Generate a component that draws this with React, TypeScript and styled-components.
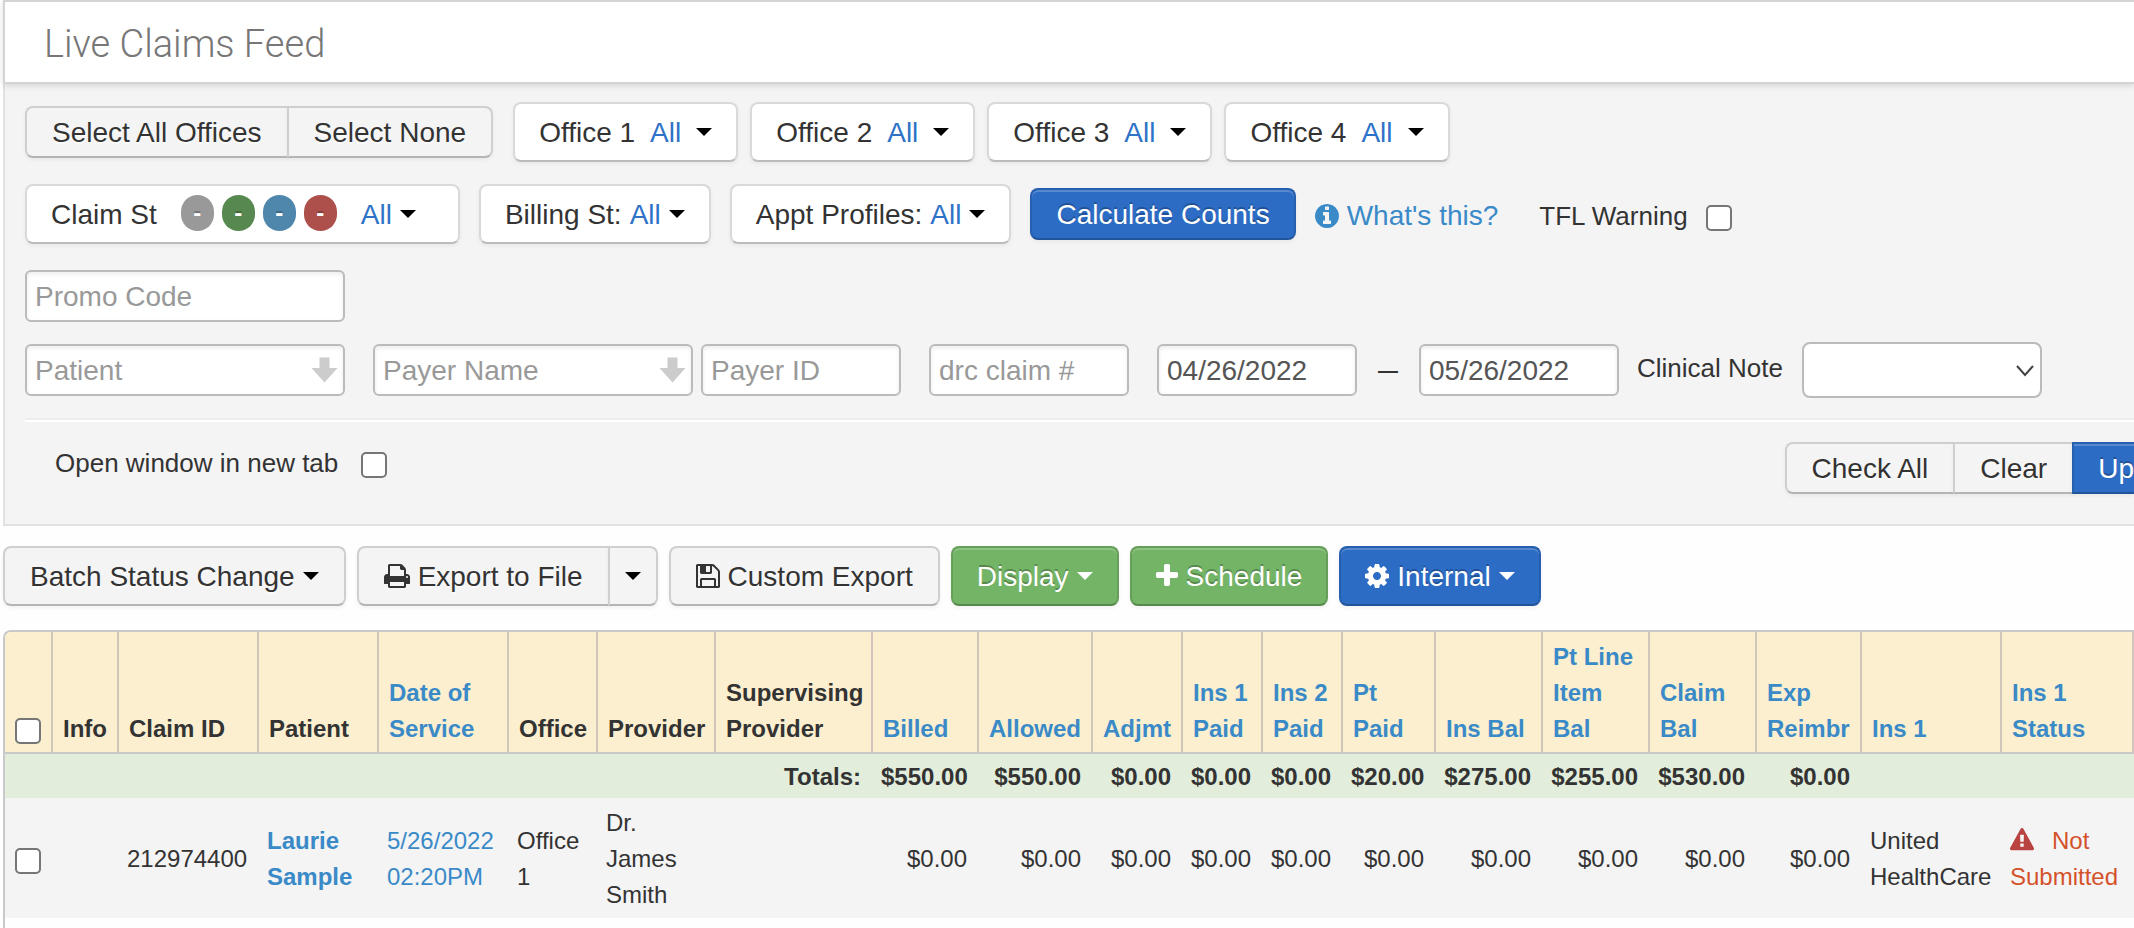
import React from "react";
import styled, { createGlobalStyle, css } from "styled-components";

const GlobalStyle = createGlobalStyle`
  *, *::before, *::after { box-sizing: border-box; }
  body {
    margin: 0;
    background: #fefefe;
    color: #333;
    font-family: "Liberation Sans", Arial, Helvetica, sans-serif;
  }
  button, input, select { font-family: inherit; }
`;

/* ---------- icons ---------- */

const iconShapes = {
  plus: {
    x: 192,
    w: 1408,
    d: "M1600 736v192q0 40-28 68t-68 28h-416v416q0 40-28 68t-68 28h-192q-40 0-68-28t-28-68v-416h-416q-40 0-68-28t-28-68v-192q0-40 28-68t68-28h416v-416q0-40 28-68t68-28h192q40 0 68 28t28 68v416h416q40 0 68 28t28 68z",
  },
  cog: {
    x: 128,
    w: 1536,
    d: "M1152 896q0-106-75-181t-181-75-181 75-75 181 75 181 181 75 181-75 75-181zm512-109v222q0 12-8 23t-20 13l-185 28q-19 54-39 91 35 50 107 138 10 12 10 25t-9 23q-27 37-99 108t-94 71q-12 0-26-9l-138-108q-44 23-91 38-16 136-29 186-7 28-36 28h-222q-14 0-24.500-8.500t-11.500-21.500l-28-184q-49-16-90-37l-141 107q-10 9-25 9-14 0-25-11-126-114-165-168-7-10-7-23 0-12 8-23 15-21 51-66.500t54-70.500q-27-50-41-99l-183-27q-13-2-21-12.500t-8-23.500v-222q0-12 8-23t19-13l186-28q14-46 39-92-40-57-107-138-10-12-10-24 0-10 9-23 26-36 98.500-107.500t94.500-71.500q13 0 26 10l138 107q44-23 91-38 16-136 29-186 7-28 36-28h222q14 0 24.500 8.500t11.500 21.500l28 184q49 16 90 37l142-107q9-9 24-9 13 0 25 10 129 119 165 170 7 8 7 22 0 12-8 23-15 21-51 66.500t-54 70.500q26 50 41 98l183 28q13 2 21 12.500t8 23.500z",
  },
  info: {
    x: 128,
    w: 1536,
    d: "M1152 1376v-160q0-14-9-23t-23-9h-96v-512q0-14-9-23t-23-9h-320q-14 0-23 9t-9 23v160q0 14 9 23t23 9h96v320h-96q-14 0-23 9t-9 23v160q0 14 9 23t23 9h448q14 0 23-9t9-23zm-128-896v-160q0-14-9-23t-23-9h-192q-14 0-23 9t-9 23v160q0 14 9 23t23 9h192q14 0 23-9t9-23zm640 416q0 209-103 385.500t-279.500 279.500-385.500 103-385.500-103-279.500-279.500-103-385.500 103-385.500 279.500-279.500 385.500-103 385.500 103 279.500 279.500 103 385.500z",
  },
  print: {
    x: 64,
    w: 1664,
    d: "M448 1536h896v-256h-896v256zm0-640h896v-384h-160q-40 0-68-28t-28-68v-160h-640v640zm1152 64q0-26-19-45t-45-19-45 19-19 45 19 45 45 19 45-19 19-45zm128 0v416q0 13-9.500 22.500t-22.500 9.500h-224v160q0 40-28 68t-68 28h-960q-40 0-68-28t-28-68v-160h-224q-13 0-22.500-9.500t-9.500-22.500v-416q0-79 56.500-135.500t135.500-56.500h64v-544q0-40 28-68t68-28h672q40 0 88 20t76 48l152 152q28 28 48 76t20 88v256h64q79 0 135.500 56.500t56.500 135.500z",
  },
  save: {
    x: 128,
    w: 1536,
    d: "M512 1536h768v-384h-768v384zm896 0h128v-896q0-14-10-38.500t-20-34.500l-281-281q-10-10-34-20t-39-10v416q0 40-28 68t-68 28h-576q-40 0-68-28t-28-68v-416h-128v1280h128v-416q0-40 28-68t68-28h832q40 0 68 28t28 68v416zm-384-928v-320q0-13-9.500-22.500t-22.500-9.500h-192q-13 0-22.500 9.500t-9.500 22.500v320q0 13 9.500 22.500t22.500 9.500h192q13 0 22.500-9.500t9.500-22.500zm640 32v928q0 40-28 68t-68 28h-1344q-40 0-68-28t-28-68v-1344q0-40 28-68t68-28h928q40 0 88 20t76 48l280 280q28 28 48 76t20 88z",
  },
  warning: {
    x: 0,
    w: 1792,
    d: "M1024 1375v-190q0-14-9.500-23.500t-22.500-9.500h-192q-13 0-22.500 9.500t-9.500 23.500v190q0 14 9.500 23.500t22.500 9.500h192q13 0 22.500-9.500t9.500-23.500zm-2-374l18-459q0-12-10-19-13-11-24-11h-220q-11 0-24 11-10 7-10 21l17 457q0 10 10 16.500t24 6.500h185q14 0 23.500-6.500t10.500-16.500zm-14-934l768 1408q35 63-2 126-17 29-46.500 46t-63.500 17h-1536q-34 0-63.500-17t-46.500-46q-37-63-2-126l768-1408q17-31 47-49t65-18 65 18 47 49z",
  },
};

const IconSvg = styled.svg`
  height: 28px;
  flex: none;
  fill: currentColor;
`;

function Icon({ name }: { name: keyof typeof iconShapes }) {
  const shape = iconShapes[name];
  return (
    <IconSvg viewBox={`${shape.x} 0 ${shape.w} 1792`} aria-hidden="true">
      <path d={shape.d} />
    </IconSvg>
  );
}

const WarningMark = styled.span`
  display: inline-block;
  margin-right: 18px;
  color: #b94340;
  vertical-align: -3px;

  svg {
    display: block;
    height: 24px;
  }
`;

const Caret = styled.span`
  flex: none;
  border: 8px solid transparent;
  border-top-color: currentColor;
  border-bottom: 0;
`;

/* ---------- buttons ---------- */

type Tone = "default" | "white" | "blue" | "green";

const tones = {
  default: css`
    padding: 2px 25px 0;
    color: #333;
    background: #f4f4f4;
    border-color: #cfcfcf #cfcfcf #b5b5b5;
    text-shadow: 0 2px 2px rgba(255, 255, 255, 0.75);
    ${Caret} { color: #000; }
  `,
  white: css`
    color: #333;
    background: #fff;
    border-color: #d9d9d9 #d9d9d9 #bcbcbc;
    ${Caret} { color: #000; }
  `,
  blue: css`
    color: #fff;
    background: #2d6cc5;
    border-color: #265fae #265fae #22549a;
    box-shadow: inset 0 2px 0 rgba(255, 255, 255, 0.2), 0 2px 4px rgba(0, 0, 0, 0.05);
    text-shadow: 0 -2px 0 rgba(0, 0, 0, 0.25);
  `,
  green: css`
    color: #fff;
    background: #74b467;
    border-color: #659f5a #659f5a #568a4c;
    box-shadow: inset 0 2px 0 rgba(255, 255, 255, 0.2), 0 2px 4px rgba(0, 0, 0, 0.05);
    text-shadow: 0 -2px 0 rgba(0, 0, 0, 0.25);
  `,
};

const Button = styled.button<{ $tone?: Tone; $tall?: boolean }>`
  display: inline-flex;
  flex: none;
  align-items: center;
  gap: 8px;
  height: ${(p) => (p.$tall ? 60 : 52)}px;
  padding: 2px 24px 0;
  border: 2px solid;
  border-radius: 8px;
  font-size: 28px;
  line-height: 32px;
  white-space: nowrap;
  box-shadow: 0 2px 4px rgba(0, 0, 0, 0.05);
  cursor: pointer;
  ${(p) => tones[p.$tone ?? "default"]}

  svg, ${Caret} { margin-bottom: 2px; }
`;

const OfficeButton = styled(Button)`
  gap: 15px;
`;

const ClaimStatusButton = styled(Button)`
  gap: 24px;
  padding-right: 42px;
`;

const SplitCaretButton = styled(Button)`
  padding: 2px 15px 0;
`;

const EdgeButton = styled(Button)`
  padding-right: 0;
`;

const ButtonGroup = styled.div<{ $openEnd?: boolean }>`
  display: flex;
  flex: none;

  > button { border-radius: 0; }
  > button + button { margin-left: -2px; }
  > button:first-child { border-radius: 8px 0 0 8px; }
  > button:last-child {
    border-radius: ${(p) => (p.$openEnd ? "0" : "0 8px 8px 0")};
    ${(p) => p.$openEnd && "border-right: 0;"}
  }
`;

const Choice = styled.span`
  color: #2f73c8;
`;

const ChoiceWithCaret = styled.span`
  display: inline-flex;
  align-items: center;
  gap: 8px;
`;

const Badges = styled.span`
  display: inline-flex;
  gap: 8px;
  margin-bottom: 4px;
`;

const Badge = styled.span<{ $color: string }>`
  width: 33px;
  height: 36px;
  border-radius: 18px;
  background: ${(p) => p.$color};
  color: #fff;
  font-size: 24px;
  font-weight: 700;
  line-height: 36px;
  text-align: center;
  text-shadow: 0 -2px 0 rgba(0, 0, 0, 0.25);
`;

/* ---------- form fields ---------- */

const Field = styled.input<{ $size?: "wide" | "normal" }>`
  display: block;
  flex: none;
  width: ${(p) => (p.$size === "wide" ? 320 : 200)}px;
  height: 52px;
  padding: 2px 8px 0;
  border: 2px solid #bbb;
  border-radius: 6px;
  background: #fff;
  box-shadow: inset 0 2px 4px rgba(0, 0, 0, 0.08);
  color: #555;
  font-size: 28px;

  &::placeholder {
    color: #999;
    opacity: 1;
  }
`;

const Overlaid = styled.div`
  position: relative;
  flex: none;
`;

const PickerArrow = styled.svg`
  position: absolute;
  right: 7px;
  top: 13px;
  width: 27px;
  height: 26px;
  fill: #ccc;
  pointer-events: none;
`;

const SelectChevron = styled.svg`
  position: absolute;
  right: 7px;
  top: 22px;
  width: 20px;
  height: 13px;
  fill: none;
  stroke: #444;
  stroke-width: 2;
  pointer-events: none;
`;

const Select = styled.select`
  display: block;
  width: 240px;
  height: 56px;
  appearance: none;
  border: 2px solid #bbb;
  border-radius: 8px;
  background: #fff;
  font-size: 28px;
`;

const Label = styled.label`
  flex: none;
  padding-bottom: 4px;
  font-size: 26px;
  line-height: 32px;
`;

const Checkbox = styled.input`
  display: block;
  flex: none;
  width: 26px;
  height: 26px;
  margin: 0;
  appearance: none;
  border: 2px solid #767676;
  border-radius: 5px;
  background: #fff;
`;

const CheckLabel = styled.label<{ $gap?: number }>`
  display: flex;
  align-items: center;
  gap: ${(p) => p.$gap ?? 18}px;
  font-size: 26px;
  line-height: 42px;
  white-space: nowrap;

  input { margin-top: 4px; }
`;

const Dash = styled.span`
  font-size: 20px;
  font-weight: 700;
`;

/* ---------- page structure ---------- */

const Page = styled.div`
  display: flex;
  flex-direction: column;
  min-height: 100vh;
  padding-left: 3px;
  overflow: hidden;
`;

const Header = styled.header`
  position: relative;
  height: 84px;
  padding-left: 39px;
  border: solid #d4d4d4;
  border-width: 2px 0 2px 2px;
  background: #fff;
  box-shadow: 0 2px 6px rgba(0, 0, 0, 0.12);
`;

const Title = styled.h1`
  margin: 0;
  color: #777;
  font-family: Roboto, "Liberation Sans", sans-serif;
  font-size: 38px;
  font-weight: 300;
  line-height: 84px;
`;

const Filters = styled.form`
  padding: 18px 0 30px 20px;
  border: solid #e2e2e2;
  border-width: 0 0 2px 2px;
  background: #f4f4f4;
`;

const OfficeRow = styled.div`
  display: flex;
  align-items: center;
  gap: 20px;
  margin-bottom: 22px;
`;

const Offices = styled.div`
  display: flex;
  gap: 12px;
`;

const StatusRow = styled.div`
  display: flex;
  align-items: center;
  gap: 19px;
  margin-bottom: 26px;
`;

const StatusHelp = styled.div`
  display: flex;
  align-items: center;
  gap: 41px;
  padding-top: 4px;
`;

const HelpLink = styled.a`
  display: inline-flex;
  align-items: center;
  gap: 8px;
  color: #3a8ac8;
  font-size: 28px;
  text-decoration: none;
  white-space: nowrap;
`;

const SearchRow = styled.div`
  display: flex;
  align-items: center;
  gap: 28px;
  margin: 20px 0;
`;

const PayerFields = styled.div`
  display: flex;
  gap: 8px;
`;

const DateFields = styled.div`
  display: flex;
  align-items: center;
  gap: 21px;
`;

const NoteField = styled.div`
  display: flex;
  align-items: center;
  gap: 19px;
  margin-left: -10px;
`;

const Divider = styled.hr`
  height: 4px;
  margin: 0;
  border: 0;
  border-top: 2px solid #ececec;
  border-bottom: 2px solid #fff;
`;

const ActionRow = styled.div`
  display: flex;
  align-items: flex-start;
  justify-content: space-between;
  padding: 20px 0 0 30px;
`;

const Toolbar = styled.div`
  display: flex;
  gap: 11px;
  margin: 20px 0 24px;
`;

const TableFrame = styled.div`
  flex: 1;
  border: solid #c9c9c9;
  border-width: 2px 0 0 2px;
  border-radius: 8px 0 0 0;
  overflow: hidden;
`;

const Table = styled.table`
  width: 100%;
  border-collapse: separate;
  border-spacing: 0;
  table-layout: fixed;
  font-size: 24px;
  line-height: 36px;

  a {
    color: #3a8ac8;
    text-decoration: none;
  }
`;

const HeadCell = styled.th<{ $width?: number }>`
  width: ${(p) => (p.$width ? `${p.$width}px` : "auto")};
  padding: 7px 10px 5px;
  border-bottom: 2px solid #c9c9c9;
  border-left: 2px solid #d0c6bb;
  background: #fcefcf;
  text-align: left;
  vertical-align: bottom;

  &:first-child { border-left: 0; }
  &:last-child { border-right: 2px solid #d0c6bb; }

  input { margin-bottom: 3px; }
`;

const TotalCell = styled.td`
  padding: 5px 10px 3px;
  background: #e2eedb;
  font-weight: 700;
  text-align: right;
`;

const Cell = styled.td<{ $money?: boolean }>`
  padding: 7px 10px 5px;
  background: #f4f4f4;
  text-align: ${(p) => (p.$money ? "right" : "left")};

  input { margin-top: 4px; }
`;

const Strong = styled.a`
  font-weight: 700;
`;

const NotSubmitted = styled.span`
  color: #d4522b;
`;

/* ---------- data ---------- */

const offices = ["Office 1", "Office 2", "Office 3", "Office 4"];
const badgeColors = ["#999", "#56884f", "#4f87ac", "#ad504c"];

const columns: { label: string; width?: number; sortable?: boolean }[] = [
  { label: "Info", width: 66 },
  { label: "Claim ID", width: 140 },
  { label: "Patient", width: 120 },
  { label: "Date of Service", width: 130, sortable: true },
  { label: "Office", width: 89 },
  { label: "Provider", width: 118 },
  { label: "Supervising Provider", width: 157 },
  { label: "Billed", width: 106, sortable: true },
  { label: "Allowed", width: 114, sortable: true },
  { label: "Adjmt", width: 90, sortable: true },
  { label: "Ins 1 Paid", width: 80, sortable: true },
  { label: "Ins 2 Paid", width: 80, sortable: true },
  { label: "Pt Paid", width: 93, sortable: true },
  { label: "Ins Bal", width: 107, sortable: true },
  { label: "Pt Line Item Bal", width: 107, sortable: true },
  { label: "Claim Bal", width: 107, sortable: true },
  { label: "Exp Reimbr", width: 105, sortable: true },
  { label: "Ins 1", width: 140, sortable: true },
  { label: "Ins 1 Status", sortable: true },
];

const totals = [
  "$550.00", "$550.00", "$0.00", "$0.00", "$0.00",
  "$20.00", "$275.00", "$255.00", "$530.00", "$0.00",
];

function PickerField({ label }: { label: string }) {
  return (
    <Overlaid>
      <Field $size="wide" placeholder={label} aria-label={label} />
      <PickerArrow viewBox="0 0 27 26" aria-hidden="true">
        <path d="M8.500 0.500h10V11H26.500L13.500 25.500 0.500 11H8.500z" />
      </PickerArrow>
    </Overlaid>
  );
}

function FilterPanel() {
  return (
    <Filters onSubmit={(e) => e.preventDefault()}>
      <OfficeRow>
        <ButtonGroup>
          <Button type="button">Select All Offices</Button>
          <Button type="button">Select None</Button>
        </ButtonGroup>
        <Offices>
          {offices.map((office) => (
            <OfficeButton key={office} type="button" $tone="white" $tall>
              {office}
              <Choice>All</Choice>
              <Caret />
            </OfficeButton>
          ))}
        </Offices>
      </OfficeRow>

      <StatusRow>
        <ClaimStatusButton type="button" $tone="white" $tall>
          Claim St
          <Badges>
            {badgeColors.map((color) => (
              <Badge key={color} $color={color}>-</Badge>
            ))}
          </Badges>
          <ChoiceWithCaret>
            <Choice>All</Choice>
            <Caret />
          </ChoiceWithCaret>
        </ClaimStatusButton>
        <Button type="button" $tone="white" $tall>
          Billing St: <Choice>All</Choice>
          <Caret />
        </Button>
        <Button type="button" $tone="white" $tall>
          Appt Profiles: <Choice>All</Choice>
          <Caret />
        </Button>
        <Button type="button" $tone="blue">Calculate Counts</Button>
        <StatusHelp>
          <HelpLink href="#help">
            <Icon name="info" />
            What's this?
          </HelpLink>
          <CheckLabel>
            TFL Warning
            <Checkbox type="checkbox" />
          </CheckLabel>
        </StatusHelp>
      </StatusRow>

      <Field $size="wide" placeholder="Promo Code" aria-label="Promo Code" />

      <SearchRow>
        <PickerField label="Patient" />
        <PayerFields>
          <PickerField label="Payer Name" />
          <Field placeholder="Payer ID" aria-label="Payer ID" />
        </PayerFields>
        <Field placeholder="drc claim #" aria-label="drc claim #" />
        <DateFields>
          <Field defaultValue="04/26/2022" aria-label="From date" />
          <Dash>—</Dash>
          <Field defaultValue="05/26/2022" aria-label="To date" />
        </DateFields>
        <NoteField>
          <Label htmlFor="clinical-note">Clinical Note</Label>
          <Overlaid>
            <Select id="clinical-note" />
            <SelectChevron viewBox="0 0 20 13" aria-hidden="true">
              <path d="M2 2l8 9 8-9" />
            </SelectChevron>
          </Overlaid>
        </NoteField>
      </SearchRow>

      <Divider />

      <ActionRow>
        <CheckLabel $gap={23}>
          Open window in new tab
          <Checkbox type="checkbox" />
        </CheckLabel>
        <ButtonGroup $openEnd>
          <Button type="button">Check All</Button>
          <Button type="button">Clear</Button>
          <EdgeButton type="submit" $tone="blue">Up</EdgeButton>
        </ButtonGroup>
      </ActionRow>
    </Filters>
  );
}

function ClaimsTable() {
  return (
    <TableFrame>
      <Table>
        <thead>
          <tr>
            <HeadCell $width={46}>
              <Checkbox type="checkbox" aria-label="Select all claims" />
            </HeadCell>
            {columns.map(({ label, width, sortable }) => (
              <HeadCell key={label} $width={width} scope="col">
                {sortable ? <a href="#sort">{label}</a> : label}
              </HeadCell>
            ))}
          </tr>
        </thead>
        <tbody>
          <tr>
            <TotalCell colSpan={8}>Totals:</TotalCell>
            {totals.map((total, i) => (
              <TotalCell key={i}>{total}</TotalCell>
            ))}
            <TotalCell colSpan={2} />
          </tr>
          <tr>
            <Cell>
              <Checkbox type="checkbox" aria-label="Select claim 212974400" />
            </Cell>
            <Cell />
            <Cell>212974400</Cell>
            <Cell><Strong href="#patient">Laurie Sample</Strong></Cell>
            <Cell><a href="#service">5/26/2022 02:20PM</a></Cell>
            <Cell>Office 1</Cell>
            <Cell>Dr. James Smith</Cell>
            <Cell />
            {totals.map((_, i) => (
              <Cell key={i} $money>$0.00</Cell>
            ))}
            <Cell>United HealthCare</Cell>
            <Cell>
              <NotSubmitted>
                <WarningMark><Icon name="warning" /></WarningMark>
                Not Submitted
              </NotSubmitted>
            </Cell>
          </tr>
        </tbody>
      </Table>
    </TableFrame>
  );
}

export default function App() {
  return (
    <>
      <GlobalStyle />
      <Page>
        <Header>
          <Title>Live Claims Feed</Title>
        </Header>
        <FilterPanel />
        <Toolbar>
          <Button type="button" $tall>
            Batch Status Change
            <Caret />
          </Button>
          <ButtonGroup>
            <Button type="button" $tall>
              <Icon name="print" />
              Export to File
            </Button>
            <SplitCaretButton type="button" $tall aria-label="More export options">
              <Caret />
            </SplitCaretButton>
          </ButtonGroup>
          <Button type="button" $tall>
            <Icon name="save" />
            Custom Export
          </Button>
          <Button type="button" $tone="green" $tall>
            Display
            <Caret />
          </Button>
          <Button type="button" $tone="green" $tall>
            <Icon name="plus" />
            Schedule
          </Button>
          <Button type="button" $tone="blue" $tall>
            <Icon name="cog" />
            Internal
            <Caret />
          </Button>
        </Toolbar>
        <ClaimsTable />
      </Page>
    </>
  );
}
